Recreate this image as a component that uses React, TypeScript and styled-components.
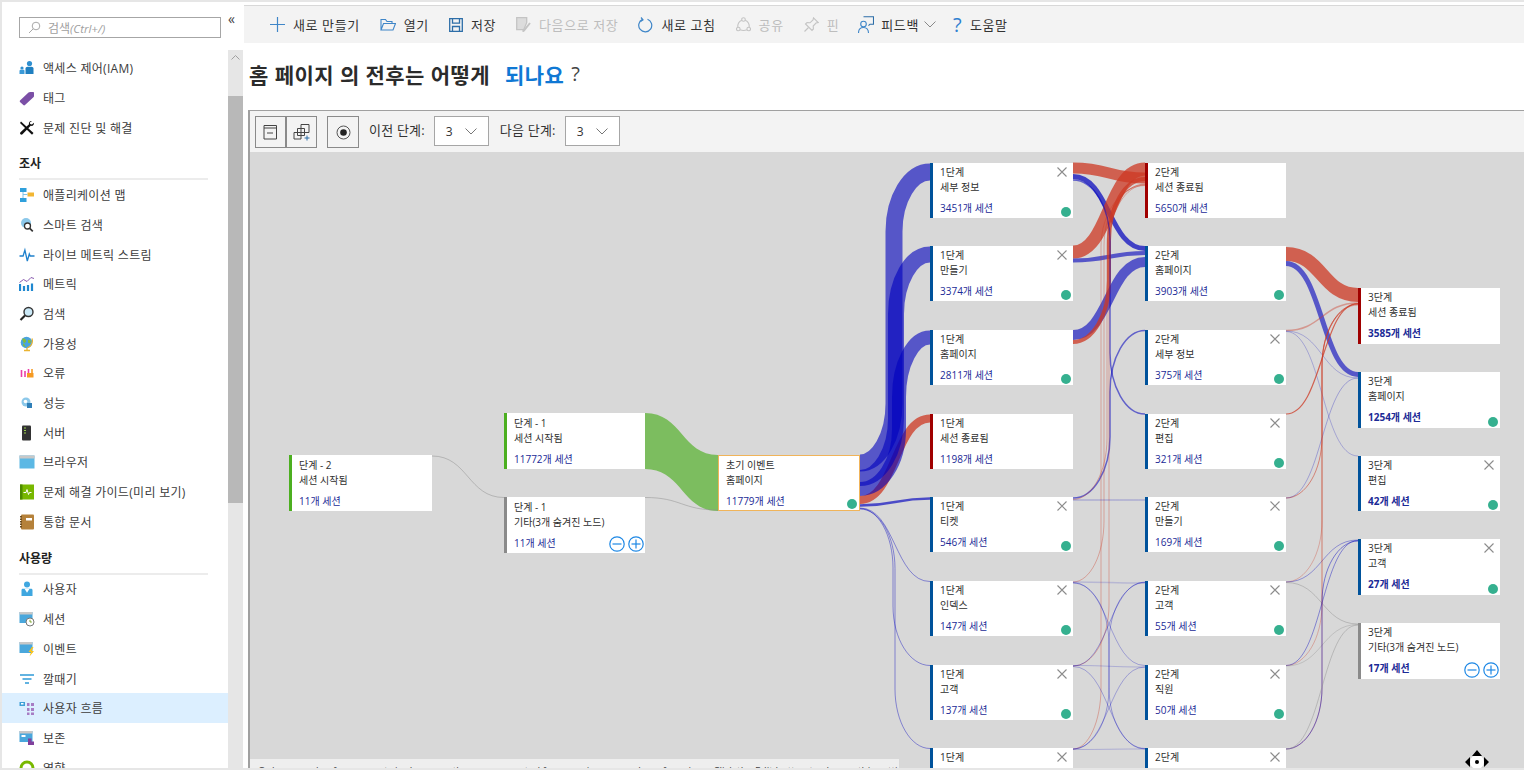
import React from "react";
import styled, { createGlobalStyle } from "styled-components";

const FONT = `"Open Sans", "Noto Sans CJK KR", sans-serif`;
const ORIGIN_X = 250;
const ORIGIN_Y = 152;

const BLUE = "#0000be";
const RED = "#cd3823";
const GRAY = "#8f8f8f";

const GlobalStyle = createGlobalStyle`
  html, body {
    margin: 0;
    padding: 0;
    overflow: hidden;
    background: #fff;
    font-family: ${FONT};
  }
  * {
    box-sizing: border-box;
  }
`;

const Page = styled.div`
  width: 1524px;
  height: 770px;
  padding: 2px 0 2px 2px;
  background: #e6e6e6;
  display: flex;
  overflow: hidden;
`;

const Sidebar = styled.aside`
  position: relative;
  width: 242px;
  flex: none;
  display: flex;
  background: #fff;
`;

const SideContent = styled.div`
  width: 226px;
  flex: none;
  overflow: hidden;
`;

const SearchBox = styled.div`
  margin: 15px 7px 15.3px 17px;
  height: 21px;
  border: 1px solid #a6a6a6;
  display: flex;
  align-items: center;
  gap: 7px;
  padding-left: 8px;
  color: #a0a0a0;
  font-size: 12px;
  svg {
    flex: none;
  }
  em {
    font-size: 11.5px;
  }
`;

const Collapse = styled.div`
  position: absolute;
  left: 226px;
  top: 10px;
  font-size: 14px;
  line-height: 14px;
  color: #444;
`;

const ScrollTrack = styled.div`
  width: 15px;
  margin-top: 48px;
  flex: none;
  display: flex;
  flex-direction: column;
  align-items: stretch;
  background: #e6e6e6;
`;

const ScrollCap = styled.div`
  height: 46px;
  display: flex;
  justify-content: center;
  padding-top: 5px;
`;

const ScrollThumb = styled.div`
  height: 407px;
  background: #b8b8b8;
`;

const SideRow = styled.div<{ $active?: boolean }>`
  height: 29.7px;
  padding-left: 17px;
  display: flex;
  align-items: center;
  gap: 8px;
  font-size: 12px;
  letter-spacing: 0.3px;
  color: #3c3c3c;
  white-space: nowrap;
  background: ${({ $active }) => ($active ? "#dcefff" : "transparent")};
  svg {
    flex: none;
  }
`;

const SideHeading = styled.div`
  height: 38px;
  margin: 0 20px 0 17px;
  padding-bottom: 6px;
  display: flex;
  align-items: flex-end;
  font-size: 12px;
  font-weight: 700;
  color: #222;
  border-bottom: 2px solid #ececec;
`;

const Main = styled.main`
  flex: 1;
  min-width: 0;
  display: flex;
  flex-direction: column;
  background: #fff;
`;

const TopLine = styled.div`
  height: 4px;
  flex: none;
  border-bottom: 1px solid #d8d8d8;
`;

const Toolbar = styled.div`
  height: 37px;
  flex: none;
  display: flex;
  align-items: center;
  gap: 20px;
  padding-left: 26px;
  background: #f3f3f3;
`;

const ToolItem = styled.div<{ $disabled?: boolean; $pull?: number }>`
  display: flex;
  align-items: center;
  gap: 8px;
  margin-left: ${({ $pull }) => -($pull ?? 0)}px;
  font-size: 13px;
  letter-spacing: 0.6px;
  white-space: nowrap;
  color: ${({ $disabled }) => ($disabled ? "#bdbdbd" : "#333")};
  svg {
    flex: none;
  }
`;

const FeedbackLabel = styled.span`
  margin: 0 -3px 0 -1px;
`;

const HelpMark = styled.span`
  font-size: 20px;
  line-height: 20px;
  width: 9px;
  color: #2f80d0;
`;

const Title = styled.h1`
  height: 67px;
  flex: none;
  margin: 0;
  padding: 0 0 6px 5px;
  display: flex;
  align-items: center;
  gap: 7px;
  font-size: 21px;
  font-weight: 700;
  letter-spacing: 0.45px;
  color: #2b2b2b;
  white-space: pre;
  a {
    color: #0f78d4;
    margin-left: 2px;
  }
  span {
    font-weight: 400;
    color: #444;
    font-size: 20px;
  }
`;

const Panel = styled.section`
  position: relative;
  flex: 1;
  min-height: 0;
  margin-left: 4px;
  border-top: 1px solid #a0a0a0;
  border-left: 2px solid #a0a0a0;
  display: flex;
  flex-direction: column;
`;

const PanelBar = styled.div`
  height: 41px;
  flex: none;
  display: flex;
  align-items: flex-start;
  padding: 5px 0 0 5px;
  background: #f3f3f3;
`;

const IconButton = styled.div<{ $gap?: number; $w?: number }>`
  width: ${({ $w }) => $w ?? 31}px;
  height: 32px;
  margin-left: ${({ $gap }) => $gap ?? 0}px;
  border: 1px solid #8a8a8a;
  display: flex;
  align-items: center;
  justify-content: center;
`;

const BarLabel = styled.span<{ $gap: number }>`
  margin-left: ${({ $gap }) => $gap}px;
  margin-right: 9px;
  line-height: 28px;
  font-size: 13px;
  letter-spacing: 0.2px;
  color: #333;
  white-space: nowrap;
`;

const StepSelect = styled.div`
  width: 55px;
  height: 30px;
  border: 1px solid #a6a6a6;
  background: #fff;
  display: flex;
  align-items: center;
  justify-content: space-between;
  padding: 0 11px;
  font-size: 12px;
  color: #333;
`;

const Canvas = styled.div`
  position: relative;
  flex: 1;
  min-height: 0;
  overflow: hidden;
  background: #d8d8d8;
`;

const Links = styled.svg`
  position: absolute;
  left: 0;
  top: 0;
`;

const Node = styled.div<{
  $x: number;
  $y: number;
  $w: number;
  $h: number;
  $bar: string;
  $outlined?: boolean;
  $pad?: number;
}>`
  position: absolute;
  left: ${({ $x }) => $x - ORIGIN_X}px;
  top: ${({ $y }) => $y - ORIGIN_Y}px;
  width: ${({ $w }) => $w}px;
  height: ${({ $h }) => $h}px;
  background: #fff;
  border-left: 3px solid ${({ $bar }) => $bar};
  ${({ $outlined }) => ($outlined ? "border: 1px solid #f0b45a;" : "")}
  padding: ${({ $pad }) => $pad ?? 2}px 0 0 7px;
  font-size: 10px;
  color: #2e2e2e;
`;

const NodeLine = styled.div`
  height: 15px;
  line-height: 15px;
  white-space: nowrap;
`;

const NodeCount = styled.div<{ $bold?: boolean }>`
  margin-top: 6px;
  height: 15px;
  line-height: 15px;
  white-space: nowrap;
  color: #1b2a96;
  font-weight: ${({ $bold }) => ($bold ? 700 : 400)};
`;

const CloseMark = styled.svg`
  position: absolute;
  right: 6px;
  top: 4px;
`;

const StatusDot = styled.div`
  position: absolute;
  right: 2px;
  bottom: 1px;
  width: 10px;
  height: 10px;
  border-radius: 50%;
  background: #35b08f;
`;

const ExpandGroup = styled.div`
  position: absolute;
  right: 1px;
  bottom: 1px;
  display: flex;
  gap: 3px;
`;

const Notice = styled.div`
  position: absolute;
  left: 0;
  bottom: 0;
  width: 649px;
  height: 9px;
  overflow: hidden;
  background: #eee;
  padding-left: 8px;
  font-size: 10px;
  line-height: 24px;
  color: #444;
  white-space: nowrap;
`;

const MoveCursor = styled.svg`
  position: absolute;
  right: 34px;
  bottom: -6px;
`;

type Ico = { size?: number; children: React.ReactNode };
const I = ({ size = 16, children }: Ico) => (
  <svg width={size} height={size} viewBox="0 0 16 16" fill="none">
    {children}
  </svg>
);

const sideIcons: Record<string, React.ReactNode> = {
  iam: (
    <I>
      <circle cx="10.5" cy="3.5" r="2.6" fill="#2f8fd0" />
      <path d="M6.5 14V8.5c0-1 1-1.8 2-1.8h4c1 0 2 .8 2 1.8V14z" fill="#1f7fc0" />
      <circle cx="3" cy="8" r="1.6" fill="#2f8fd0" />
      <path d="M.5 14v-3c0-.7.6-1.2 1.2-1.2h2.6c.7 0 1.2.5 1.2 1.2v3z" fill="#3a9ad8" />
    </I>
  ),
  tag: (
    <I>
      <path d="M1 10.5 9.5 2.5c.5-.4 1-.6 1.6-.6H14c.6 0 1 .4 1 1v3c0 .5-.2 1-.6 1.4L6 15c-.5.5-1.2.5-1.7 0L1 12c-.4-.4-.4-1 0-1.5z" fill="#7b4fa6" />
    </I>
  ),
  tools: (
    <I>
      <path d="M2 1.5 14.5 13 13 14.8 1 3z" fill="#111" />
      <path d="M13 1c-2-.4-3.6 1.2-3 3.200L1.500 12.200c-.6.6-.6 1.400 0 2s1.400.6 2 0l8.200-8.400c2 .6 3.600-1 3.200-3l-2 1.800-1.700-.6-.4-1.600z" fill="#111" />
    </I>
  ),
  appmap: (
    <I>
      <rect x="1" y="1" width="6.5" height="4" fill="#2fa0dc" />
      <rect x="1" y="11" width="6.5" height="4" fill="#2fa0dc" />
      <rect x="8.5" y="5.5" width="6.5" height="4" fill="#f2b632" />
      <path d="M4 5v6M4 7.500h4.500" stroke="#7fc4e8" />
    </I>
  ),
  smart: (
    <I>
      <circle cx="7" cy="6" r="5" fill="#8cc8ea" />
      <circle cx="8.5" cy="9" r="3" fill="#fff" stroke="#333" strokeWidth="1.3" />
      <path d="m10.800 11.300 3 3" stroke="#333" strokeWidth="1.7" />
    </I>
  ),
  live: (
    <I>
      <path d="M.5 9h3.600l1.800-6 2.400 11 2-7 .9 2h4.300" stroke="#1f80cc" strokeWidth="1.3" />
    </I>
  ),
  metrics: (
    <I>
      <path d="M1 8v7M5 10v5M9 9v6M13 7.500v7.500" stroke="#1f88d0" strokeWidth="2.2" />
      <path d="m.5 6.500 4-3 3.500 2 4-4 3 1" stroke="#8a5cb0" />
    </I>
  ),
  search: (
    <I>
      <circle cx="9.5" cy="6" r="4.5" fill="#cbe9f7" stroke="#333" strokeWidth="1.4" />
      <path d="m6 9.500-4.500 4.500" stroke="#222" strokeWidth="2.2" />
    </I>
  ),
  globe: (
    <I>
      <circle cx="7.5" cy="6.5" r="5.8" fill="#4aa3df" />
      <path d="M3 3c2-1 4 0 4 2S4 7 4 9s3 1 3 3M9 4c2-1 3 1 3 2s-3 2-3 0z" fill="#85bb3a" />
      <path d="M13 2.500c1.500 3.500-.5 8-5 9.500M5 14.500h6M8 12v2.500" stroke="#eab432" strokeWidth="1.3" />
    </I>
  ),
  failures: (
    <I>
      <path d="M2.500 5v7M6 6v6" stroke="#ec3ea8" strokeWidth="1.6" />
      <path d="M9.500 4v8" stroke="#ec3ea8" strokeWidth="1.6" />
      <path d="M8 8h6.500v4.500H8z" fill="#f59a23" />
      <path d="M13 4v4" stroke="#f59a23" strokeWidth="1.6" />
    </I>
  ),
  perf: (
    <I>
      <circle cx="7" cy="7" r="4.5" fill="#8cc8ea" />
      <circle cx="6.5" cy="6.5" r="1.8" fill="#fff" />
      <rect x="8" y="8" width="5" height="5" fill="#2f7fb8" />
    </I>
  ),
  server: (
    <I>
      <rect x="3" y="0.5" width="9" height="15" rx="1" fill="#333" />
      <path d="M5 3h2M5 5.500h2M5 8h2" stroke="#9bd04c" />
    </I>
  ),
  browser: (
    <I>
      <rect x="0.5" y="1.5" width="15" height="13" fill="#5cb8e4" />
      <rect x="0.5" y="1.5" width="15" height="3" fill="#c8c8c8" />
    </I>
  ),
  guide: (
    <I>
      <rect x="1" y="0.5" width="14" height="15" fill="#78b800" />
      <rect x="1" y="0.5" width="2.5" height="15" fill="#4d8a00" />
      <path d="M4.500 8.500h2.500l1-3 1.500 5 1-2h2" stroke="#fff" />
    </I>
  ),
  workbook: (
    <I>
      <rect x="2" y="0.5" width="13" height="15" rx="1" fill="#b5813a" />
      <path d="M2 2v12" stroke="#6d4c1f" strokeWidth="2" strokeDasharray="1.5 1" />
      <rect x="7" y="4" width="6" height="2.5" fill="#fff" />
    </I>
  ),
  user: (
    <I>
      <circle cx="8" cy="3.5" r="3" fill="#3fa7e0" />
      <path d="M2.500 15V9c0-.7.6-1.300 1.300-1.300h8.400c.7 0 1.300.6 1.300 1.300v6z" fill="#3fa7e0" />
      <path d="m5.500 7.700 2.500 4 2.500-4" fill="#fff" />
    </I>
  ),
  session: (
    <I>
      <rect x="0.5" y="1" width="13" height="11" fill="#4aa7dc" />
      <rect x="0.5" y="1" width="13" height="2.5" fill="#c8c8c8" />
      <circle cx="11" cy="11" r="4" fill="#fff" stroke="#777" />
      <path d="M11 8.800V11h1.800" stroke="#7aa52a" />
    </I>
  ),
  events: (
    <I>
      <rect x="0.5" y="1" width="13" height="11" fill="#4aa7dc" />
      <rect x="0.5" y="1" width="13" height="2.5" fill="#c8c8c8" />
      <path d="M13 6 9.500 11H12l-1.500 4.500L15 10h-2.500L14.500 6z" fill="#fcc419" />
    </I>
  ),
  funnel: (
    <I>
      <path d="M1 4h14M3.500 8h9M6 12h4" stroke="#2f9bd8" strokeWidth="1.6" />
    </I>
  ),
  flow: (
    <I>
      <rect x="0.5" y="2" width="5.5" height="4" fill="#3fa0d8" />
      <rect x="2" y="3" width="2.5" height="1.5" fill="#fff" />
      <path d="M8 3h2.500v3H8zM12 3h3v3h-3zM8 8h2.500v3H8zM12 8h3v3h-3zM8 12.500h2.500V15H8zM12 12.500h3V15h-3z" fill="#a77cc4" />
    </I>
  ),
  retention: (
    <I>
      <rect x="0.5" y="1" width="13" height="11" fill="#4aa7dc" />
      <rect x="0.5" y="1" width="13" height="2.5" fill="#c8c8c8" />
      <rect x="2.5" y="5" width="4" height="2" fill="#fff" />
      <path d="M9 8.500h3.500v3H15V15H9z" fill="#80409c" />
    </I>
  ),
  impact: (
    <I>
      <circle cx="8" cy="8" r="6" stroke="#78b800" strokeWidth="3" />
    </I>
  ),
};

const sideTop = [
  ["iam", "액세스 제어(IAM)"],
  ["tag", "태그"],
  ["tools", "문제 진단 및 해결"],
];
const sideInvestigate = [
  ["appmap", "애플리케이션 맵"],
  ["smart", "스마트 검색"],
  ["live", "라이브 메트릭 스트림"],
  ["metrics", "메트릭"],
  ["search", "검색"],
  ["globe", "가용성"],
  ["failures", "오류"],
  ["perf", "성능"],
  ["server", "서버"],
  ["browser", "브라우저"],
  ["guide", "문제 해결 가이드(미리 보기)"],
  ["workbook", "통합 문서"],
];
const sideUsage = [
  ["user", "사용자"],
  ["session", "세션"],
  ["events", "이벤트"],
  ["funnel", "깔때기"],
  ["flow", "사용자 흐름"],
  ["retention", "보존"],
  ["impact", "영향"],
];

type LinkDef = [number, number, number, number, number, string, number, number?];

// x1, y1, x2, y2, width, colour, opacity, optional x of the vertical run (page coordinates)
const links: LinkDef[] = [
  [432, 456, 504, 497.5, 1, GRAY, 0.5],
  [645, 497.5, 718, 510, 1, GRAY, 0.5],

  [860, 500, 930, 418.5, 8, RED, 0.75],
  [860, 463, 930, 172, 17, BLUE, 0.6, 894],
  [860, 478, 930, 254.5, 16, BLUE, 0.6, 896],
  [860, 489, 930, 337.5, 14, BLUE, 0.6, 899],
  [860, 505.5, 930, 498.5, 2.5, BLUE, 0.65],
  [860, 508, 930, 581.5, 1, BLUE, 0.4],
  [860, 508.5, 930, 665.5, 1, BLUE, 0.4, 893],
  [860, 509, 930, 748.5, 1, BLUE, 0.4, 895],

  [1073, 168, 1145, 178, 11, RED, 0.75],
  [1073, 176.5, 1145, 248.5, 5, BLUE, 0.7],
  [1073, 252, 1145, 169, 13, RED, 0.75],
  [1073, 260.5, 1145, 253, 4, BLUE, 0.6],
  [1073, 335, 1145, 262, 10, BLUE, 0.6],
  [1073, 342, 1145, 179, 4, RED, 0.75],
  [1073, 180, 1145, 414, 1.5, BLUE, 0.55, 1110],
  [1073, 498, 1145, 330.5, 1.5, BLUE, 0.55, 1110],
  [1073, 499.5, 1145, 184, 0.8, RED, 0.45, 1107],
  [1073, 582, 1145, 184.5, 0.8, RED, 0.45, 1104],
  [1073, 666, 1145, 185, 0.8, RED, 0.45, 1109],
  [1073, 749, 1145, 185.5, 0.8, RED, 0.45, 1101],
  [1073, 500, 1145, 500, 1, BLUE, 0.3],
  [1073, 582, 1145, 583, 1.5, BLUE, 0.15],
  [1073, 582.5, 1145, 665.5, 0.8, BLUE, 0.35],
  [1073, 583, 1145, 748.5, 0.8, BLUE, 0.4],
  [1073, 666, 1145, 582, 0.8, BLUE, 0.4],
  [1073, 665.5, 1145, 667, 0.8, BLUE, 0.25],
  [1073, 666.5, 1145, 749, 0.8, BLUE, 0.35],
  [1073, 749, 1145, 582.5, 0.8, BLUE, 0.4],
  [1073, 749, 1145, 667, 0.8, BLUE, 0.35],
  [1073, 749.5, 1145, 749, 0.8, BLUE, 0.25],

  [1286, 254, 1358, 295, 14, RED, 0.75],
  [1286, 263.5, 1358, 374.5, 5, BLUE, 0.6],
  [1286, 330.5, 1358, 303, 1.5, RED, 0.4],
  [1286, 331, 1358, 378, 0.8, BLUE, 0.3],
  [1286, 331.5, 1358, 456, 0.8, BLUE, 0.3],
  [1286, 414, 1358, 303.5, 1.2, RED, 0.75],
  [1286, 498, 1358, 304, 0.9, RED, 0.6],
  [1286, 498, 1358, 378, 0.9, BLUE, 0.3],
  [1286, 582, 1358, 304, 0.8, RED, 0.4],
  [1286, 582, 1358, 540, 1, BLUE, 0.35],
  [1286, 582.5, 1358, 624, 1, GRAY, 0.45],
  [1286, 665.5, 1358, 304.5, 0.8, RED, 0.4],
  [1286, 665.5, 1358, 540.5, 1, BLUE, 0.4],
  [1286, 666, 1358, 624.5, 0.8, GRAY, 0.45],
  [1286, 749, 1358, 305, 0.8, RED, 0.4],
  [1286, 749, 1358, 541, 1, BLUE, 0.45],
  [1286, 749, 1358, 625, 1, GRAY, 0.45],
];

// long vertical hops run straight up the gutter with soft corners, short ones are plain S curves
const curve = (x1: number, y1: number, x2: number, y2: number, run?: number) => {
  const mx = run ?? (x1 + x2) / 2;
  const dy = y2 - y1;
  const dx = x2 - x1;
  if (Math.abs(dy) < dx * 2) {
    return `M${x1} ${y1}C${mx} ${y1} ${mx} ${y2} ${x2} ${y2}`;
  }
  const r = Math.sign(dy) * Math.min(dx * 0.85, Math.abs(dy) / 2);
  const k = 0.55;
  return [
    `M${x1} ${y1}`,
    `C${x1 + (mx - x1) * k} ${y1} ${mx} ${y1 + r * (1 - k)} ${mx} ${y1 + r}`,
    `L${mx} ${y2 - r}`,
    `C${mx} ${y2 - r * (1 - k)} ${x2 - (x2 - mx) * k} ${y2} ${x2} ${y2}`,
  ].join("");
};

type NodeDef = {
  x: number;
  y: number;
  top: string;
  name: string;
  count?: string;
  bar?: string;
  w?: number;
  h?: number;
  pad?: number;
  close?: boolean;
  dot?: boolean;
  expand?: boolean;
  bold?: boolean;
  outlined?: boolean;
};

const C = "#00529b";
const END = "#a00000";
const START = "#4caf20";
const OTHER = "#8a8a8a";

const col1 = 930;
const col2 = 1145;
const col3 = 1358;

const nodes: NodeDef[] = [
  { x: 289, y: 455, w: 143, h: 56, pad: 3, top: "단계 - 2", name: "세션 시작됨", count: "11개 세션", bar: START },
  { x: 504, y: 413, w: 141, h: 56, pad: 3, top: "단계 - 1", name: "세션 시작됨", count: "11772개 세션", bar: START },
  { x: 504, y: 497, w: 141, h: 56, pad: 3, top: "단계 - 1", name: "기타(3개 숨겨진 노드)", count: "11개 세션", bar: OTHER, expand: true },
  { x: 718, y: 455, w: 142, h: 56, top: "초기 이벤트", name: "홈페이지", count: "11779개 세션", outlined: true, dot: true },

  { x: col1, y: 163, top: "1단계", name: "세부 정보", count: "3451개 세션", close: true, dot: true },
  { x: col1, y: 246, top: "1단계", name: "만들기", count: "3374개 세션", close: true, dot: true },
  { x: col1, y: 330, top: "1단계", name: "홈페이지", count: "2811개 세션", dot: true },
  { x: col1, y: 414, top: "1단계", name: "세션 종료됨", count: "1198개 세션", bar: END },
  { x: col1, y: 497, top: "1단계", name: "티켓", count: "546개 세션", close: true, dot: true },
  { x: col1, y: 581, top: "1단계", name: "인덱스", count: "147개 세션", close: true, dot: true },
  { x: col1, y: 665, top: "1단계", name: "고객", count: "137개 세션", close: true, dot: true },
  { x: col1, y: 748, top: "1단계", name: "", close: true },

  { x: col2, y: 163, w: 141, top: "2단계", name: "세션 종료됨", count: "5650개 세션", bar: END },
  { x: col2, y: 246, w: 141, top: "2단계", name: "홈페이지", count: "3903개 세션", dot: true },
  { x: col2, y: 330, w: 141, top: "2단계", name: "세부 정보", count: "375개 세션", close: true, dot: true },
  { x: col2, y: 414, w: 141, top: "2단계", name: "편집", count: "321개 세션", close: true, dot: true },
  { x: col2, y: 497, w: 141, top: "2단계", name: "만들기", count: "169개 세션", close: true, dot: true },
  { x: col2, y: 581, w: 141, top: "2단계", name: "고객", count: "55개 세션", close: true, dot: true },
  { x: col2, y: 665, w: 141, top: "2단계", name: "직원", count: "50개 세션", close: true, dot: true },
  { x: col2, y: 748, w: 141, top: "2단계", name: "", close: true },

  { x: col3, y: 288, w: 142, h: 56, top: "3단계", name: "세션 종료됨", count: "3585개 세션", bar: END, bold: true },
  { x: col3, y: 372, w: 142, h: 56, top: "3단계", name: "홈페이지", count: "1254개 세션", dot: true, bold: true },
  { x: col3, y: 456, w: 142, h: 55, top: "3단계", name: "편집", count: "42개 세션", close: true, dot: true, bold: true },
  { x: col3, y: 539, w: 142, h: 56, top: "3단계", name: "고객", count: "27개 세션", close: true, dot: true, bold: true },
  { x: col3, y: 623, w: 142, h: 56, top: "3단계", name: "기타(3개 숨겨진 노드)", count: "17개 세션", bar: OTHER, expand: true, bold: true },
];

const RoundButton = ({ plus }: { plus?: boolean }) => (
  <svg width="16" height="16" viewBox="0 0 16 16" fill="none" stroke="#1e88e5" strokeWidth="1.2">
    <circle cx="8" cy="8" r="7.2" />
    <path d="M3.5 8h9" />
    {plus && <path d="M8 3.5v9" />}
  </svg>
);

const FlowNode = ({ n }: { n: NodeDef }) => (
  <Node $x={n.x} $y={n.y} $w={n.w ?? 143} $h={n.h ?? 55} $bar={n.bar ?? C} $outlined={n.outlined} $pad={n.pad}>
    <NodeLine>{n.top}</NodeLine>
    {n.name && <NodeLine>{n.name}</NodeLine>}
    {n.count && <NodeCount $bold={n.bold}>{n.count}</NodeCount>}
    {n.close && (
      <CloseMark width="10" height="10" viewBox="0 0 10 10" stroke="#8c8c8c" strokeWidth="1.1">
        <path d="m.5.5 9 9M9.5.5l-9 9" />
      </CloseMark>
    )}
    {n.dot && <StatusDot />}
    {n.expand && (
      <ExpandGroup>
        <RoundButton />
        <RoundButton plus />
      </ExpandGroup>
    )}
  </Node>
);

const Chevron = ({ color = "#777" }: { color?: string }) => (
  <svg width="12" height="7" viewBox="0 0 12 7" fill="none" stroke={color}>
    <path d="m.5.5 5.500 5.500 5.500-5.500" />
  </svg>
);

const toolBlue = "#3f86c8";
const toolGray = "#c4c4c4";

export default function App() {
  return (
    <>
      <GlobalStyle />
      <Page>
        <Sidebar>
          <SideContent>
            <SearchBox>
              <svg width="13" height="13" viewBox="0 0 13 13" fill="none" stroke="#a8a8a8">
                <circle cx="8" cy="5" r="3.8" />
                <path d="M5.2 7.8 1 12" />
              </svg>
              <span>
                검색<em>(Ctrl+/)</em>
              </span>
            </SearchBox>
            {sideTop.map(([icon, label]) => (
              <SideRow key={label}>
                {sideIcons[icon]}
                {label}
              </SideRow>
            ))}
            <SideHeading>조사</SideHeading>
            {sideInvestigate.map(([icon, label]) => (
              <SideRow key={label}>
                {sideIcons[icon]}
                {label}
              </SideRow>
            ))}
            <SideHeading>사용량</SideHeading>
            {sideUsage.map(([icon, label]) => (
              <SideRow key={label} $active={label === "사용자 흐름"}>
                {sideIcons[icon]}
                {label}
              </SideRow>
            ))}
          </SideContent>
          <Collapse>«</Collapse>
          <ScrollTrack>
            <ScrollCap>
              <svg width="9" height="5" viewBox="0 0 9 5" fill="none" stroke="#a0a0a0">
                <path d="m.5 4.500 4-4 4 4" />
              </svg>
            </ScrollCap>
            <ScrollThumb />
          </ScrollTrack>
        </Sidebar>

        <Main>
          <TopLine />
          <Toolbar>
            <ToolItem>
              <svg width="15" height="15" viewBox="0 0 15 15" stroke={toolBlue} strokeWidth="1.2">
                <path d="M7.500 0v15M0 7.500h15" />
              </svg>
              새로 만들기
            </ToolItem>
            <ToolItem>
              <svg width="16" height="13" viewBox="0 0 16 13" fill="none" stroke={toolBlue} strokeWidth="1.1">
                <path d="M1 12V1.500h4.500L7 3.500h5v2M1 12l2.500-6.500h12L13 12z" />
              </svg>
              열기
            </ToolItem>
            <ToolItem>
              <svg width="14" height="14" viewBox="0 0 14 14" fill="none" stroke="#2d6ea8" strokeWidth="1.3">
                <path d="M.7.7h12.600v12.600H.7z" />
                <path d="M3.500.7v4.500h7V.7M3.500 13.300V8.500h7v4.800" />
              </svg>
              저장
            </ToolItem>
            <ToolItem $disabled>
              <svg width="15" height="15" viewBox="0 0 15 15" fill="none" stroke={toolGray} strokeWidth="1.3">
                <path d="M.7.7h10v5l-3 7H.7z" fill="#dcdcdc" />
                <path d="m14 6-6 7.500-1.500 1" strokeWidth="2" />
              </svg>
              다음으로 저장
            </ToolItem>
            <ToolItem>
              <svg width="15" height="16" viewBox="0 0 15 16" fill="none" stroke={toolBlue} strokeWidth="1.2">
                <path d="M9.500 2.200a6.500 6.500 0 1 1-5 .2" />
                <path d="M3 .5 5 2.800 2.500 4.500" />
              </svg>
              새로 고침
            </ToolItem>
            <ToolItem $disabled>
              <svg width="15" height="15" viewBox="0 0 15 15" fill="none" stroke={toolGray} strokeWidth="1.1">
                <circle cx="7.5" cy="2.5" r="1.8" />
                <circle cx="2.3" cy="12" r="1.8" />
                <circle cx="12.7" cy="12" r="1.8" />
                <path d="M5.800 3.200C3 4.500 1.500 7 1.800 10.200M9.200 3.200c2.800 1.300 4.300 3.800 4 7M4.100 12.800c2 .8 4.800.8 6.800 0" />
              </svg>
              공유
            </ToolItem>
            <ToolItem $disabled>
              <svg width="15" height="15" viewBox="0 0 15 15" fill="none" stroke={toolGray} strokeWidth="1.1">
                <path d="m9.500.8 4.700 4.700-2.200.5-2.800 3 .2 3L8 13.500 1.500 7l1.500-1.400 3 .2 3-2.800z" />
                <path d="M4.500 10.500.5 14.500" />
              </svg>
              핀
            </ToolItem>
            <ToolItem $pull={1}>
              <svg width="16" height="17" viewBox="0 0 16 17" fill="none" stroke={toolBlue} strokeWidth="1.1">
                <path d="M5.500.7h10v7.500h-3.500l-1.500 1.500" stroke="#2d6ea8" />
                <circle cx="5.5" cy="8" r="2.8" />
                <path d="M.5 17c0-3.500 2-5.500 5-5.500s5 2 5 5.500" />
              </svg>
              <FeedbackLabel>피드백</FeedbackLabel>
              <Chevron color="#888" />
            </ToolItem>
            <ToolItem $pull={3}>
              <HelpMark>?</HelpMark>
              도움말
            </ToolItem>
          </Toolbar>
          <Title>
            홈 페이지 의 전후는 어떻게 <a>되나요</a>
            <span>?</span>
          </Title>
          <Panel>
            <PanelBar>
              <IconButton>
                <svg width="15" height="15" viewBox="0 0 15 15" fill="none" stroke="#444">
                  <path d="M1 .5h12.500v13.500H1z" />
                  <path d="M1 3h12.500M4 8h6" />
                </svg>
              </IconButton>
              <IconButton>
                <svg width="18" height="18" viewBox="0 0 18 18" fill="none" stroke="#444">
                  <path d="M8 1.500h8v8H8zM4.500 5.500h7v7h-7zM1 9.500h7V16H1z" />
                  <path d="M14 12.500v5M11.500 15h5" stroke="#2d6ea8" />
                </svg>
              </IconButton>
              <IconButton $gap={10} $w={32}>
                <svg width="15" height="15" viewBox="0 0 15 15" fill="none">
                  <circle cx="7.5" cy="7.5" r="6.5" stroke="#555" />
                  <circle cx="7.5" cy="7.5" r="3.3" fill="#222" />
                </svg>
              </IconButton>
              <BarLabel $gap={10}>이전 단계:</BarLabel>
              <StepSelect>
                3
                <Chevron />
              </StepSelect>
              <BarLabel $gap={11}>다음 단계:</BarLabel>
              <StepSelect>
                3
                <Chevron />
              </StepSelect>
            </PanelBar>
            <Canvas>
              <Links width={1274} height={618} viewBox={`${ORIGIN_X} ${ORIGIN_Y} 1274 618`} fill="none">
                <path d="M645 413C682 413 682 455 718 455V511C682 511 682 469 645 469Z" fill="#7cbd5f" />
                {links.map(([x1, y1, x2, y2, w, color, op, run], i) => (
                  <path key={i} d={curve(x1, y1, x2, y2, run)} stroke={color} strokeWidth={w} strokeOpacity={op} />
                ))}
              </Links>
              {nodes.map((n) => (
                <FlowNode key={`${n.x}-${n.y}`} n={n} />
              ))}
              <Notice>
                Only a sample of user events is shown; paths are aggregated for a maximum number of sessions. Click the Edit button to change this setting
              </Notice>
              <MoveCursor width="26" height="24" viewBox="0 0 26 24">
                <circle cx="13" cy="12" r="7" fill="#fff" />
                <path d="M13 0l5 6H8zM1 12l5-5v10zM25 12l-5-5v10z" fill="#000" />
                <circle cx="13" cy="12" r="2" fill="#000" />
              </MoveCursor>
            </Canvas>
          </Panel>
        </Main>
      </Page>
    </>
  );
}
